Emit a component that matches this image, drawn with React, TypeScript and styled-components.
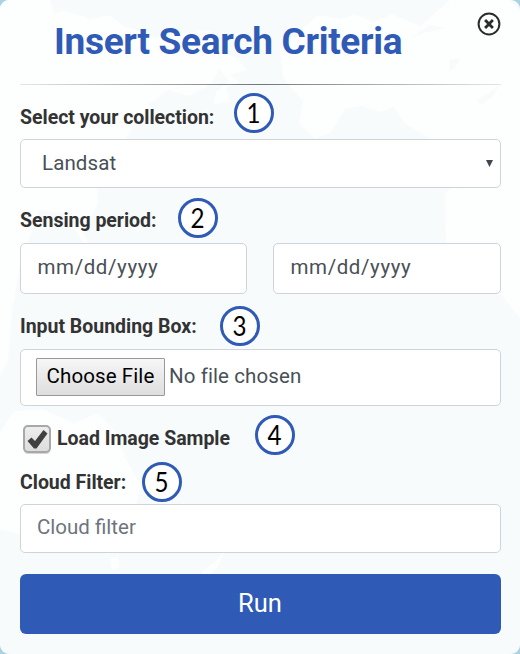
import React from "react";
import styled, { createGlobalStyle } from "styled-components";

const GlobalStyle = createGlobalStyle`
  *, *::before, *::after { box-sizing: border-box; }
  body { margin: 0; background: #a9d3e2; font-family: Roboto, sans-serif; }
  button, input, select { font-family: inherit; }
`;

const Panel = styled.form`
  position: relative;
  width: 520px;
  height: 654px;
  padding: 0 19px 20px 20px;
  border-radius: 9px;
  background: #f7fbfc;
  overflow: hidden;
  display: flex;
  flex-direction: column;
  isolation: isolate;
`;

const MapBackdrop = styled.svg`
  position: absolute;
  inset: 0;
  z-index: -1;
`;

const Header = styled.header`
  display: flex;
  justify-content: space-between;
  height: 84px;
`;

const Title = styled.h1`
  margin: 20px 0 0 34px;
  font-size: 37px;
  line-height: 44px;
  font-weight: 700;
  letter-spacing: -0.3px;
  color: #2f5bb7;
  white-space: nowrap;
`;

const CloseButton = styled.button`
  width: 24px;
  height: 24px;
  margin-top: 12px;
  padding: 0;
  border: 0;
  background: none;
  svg { display: block; }
`;

const Divider = styled.hr`
  width: 100%;
  height: 1px;
  margin: 0;
  border: 0;
  background: linear-gradient(to right, rgba(60, 60, 60, 0.12), rgba(60, 60, 60, 0.7) 50%, rgba(60, 60, 60, 0.12));
`;

const LabelRow = styled.div<{ $top: number; $bottom: number; $gap: number }>`
  display: flex;
  align-items: center;
  gap: ${(p) => p.$gap}px;
  height: 40px;
  margin: ${(p) => p.$top}px 0 ${(p) => p.$bottom}px;
`;

const Label = styled.label<{ $width: number; $shift?: number }>`
  width: ${(p) => p.$width}px;
  padding-top: ${(p) => p.$shift ?? 0}px;
  font-size: 19.5px;
  line-height: 24px;
  font-weight: 700;
  letter-spacing: -0.02px;
  color: #333;
  white-space: nowrap;
`;

const StepBadge = styled.span`
  display: flex;
  align-items: center;
  justify-content: center;
  width: 40px;
  height: 40px;
  border: 3px solid #2f5bb7;
  border-radius: 50%;
  background: #fff;
  color: #000;
  font: 26px/34px Lato, sans-serif;
`;

const Digit = styled.span`
  transform: scaleX(0.93);
`;

const Field = styled.div<{ $height: number }>`
  display: flex;
  align-items: center;
  flex: 1;
  min-height: ${(p) => p.$height}px;
  max-height: ${(p) => p.$height}px;
  border: 1px solid #ced4da;
  border-radius: 5px;
  background: #fff;
  color: #495057;
  font-size: 20.5px;
`;

const Select = styled.select`
  appearance: none;
  flex: 1;
  padding: 0 0 2px 21px;
  border: 0;
  background: none;
  color: inherit;
  font-size: inherit;
  letter-spacing: 0.1px;
`;

const SelectArrow = styled.svg`
  margin-right: 7px;
`;

const TextInput = styled.input<{ $muted?: boolean }>`
  width: 100%;
  padding: 0 0 3px ${(p) => (p.$muted ? 16 : 16.5)}px;
  border: 0;
  background: none;
  font-size: inherit;
  letter-spacing: ${(p) => (p.$muted ? 0 : 0.6)}px;
  color: #495057;
  &::placeholder { color: ${(p) => (p.$muted ? "#6c757d" : "#495057")}; opacity: 1; }
`;

const DateRow = styled.div`
  display: grid;
  grid-template-columns: 227px 228px;
  gap: 26px;
`;

const FileButton = styled.button`
  width: 129px;
  height: 38px;
  margin: 0 4px 2px 15px;
  padding: 0 0 1px;
  border: 1px solid #999;
  border-radius: 1px;
  background: linear-gradient(#f6f6f6, #dedede);
  color: #000;
  font-size: 20.5px;
  letter-spacing: 0.1px;
  white-space: nowrap;
`;

const FileStatus = styled.span`
  padding-bottom: 3px;
  letter-spacing: 0.1px;
`;

const Checkbox = styled.span`
  display: block;
  width: 28px;
  height: 29px;
  margin: 8px 6px 0 3px;
  svg { display: block; }
`;

const CheckGroup = styled.div`
  display: flex;
  align-items: center;
`;

const RunButton = styled.button`
  height: 60px;
  margin-top: 21px;
  padding: 0 1px 3px 0;
  border: 0;
  border-radius: 6px;
  background: #2f5bb7;
  color: #fff;
  font-size: 25.5px;
`;

function Continents() {
  return (
    <MapBackdrop width="520" height="654" viewBox="0 0 520 654" aria-hidden="true">
      <path fill="#fdfefe" d="M0 0H50L54 13 78 8 88 20 110 15 126 28 148 24 166 38 184 29 211 31 218 50 238 58 247 70 230 75 240 82 226 88 230 102 211 105 204 118 183 125 170 118 165 99 151 105 153 114 137 120 126 138 116 163 97 186 98 204 83 232 94 256 62 213 39 210 20 265 12 314 8 361 0 375Z" />
      <path fill="#fdfefe" d="M280 49 301 30 318 15 341 19 355 14 373 22 392 14 420 26 450 0H509L520 10V318L502 296 494 287 475 273 446 242 445 192 462 183 427 137 405 123 394 107 380 112 362 106 345 109 331 132 315 139 299 123 303 101 291 88 283 76Z" />
      <path fill="#fdfefe" d="M0 432 14 411 42 409 74 423 98 413 115 431 126 459 142 487 132 516 96 529 59 524 20 534 0 530Z M110 559 118 556 120 567 112 570Z M201 572 217 560 224 552 219 565 207 578Z" />
      <g fill="#f7fbfc">
        <path d="M148 105 168 90 190 96 212 83 219 68 229 81 216 92 213 106 199 115 180 111 172 125Z" />
        <path d="M410 39 430 25 447 28 423 33Z M449 60 460 58 455 67 450 71Z M477 100 489 93 499 85 493 96 481 105Z M344 109 366 115 371 129 391 128 405 147 414 177 432 191 407 202 381 180 365 160 344 139Z" />
        <path d="M53 4 78 0 102 9 86 17 69 12Z M129 27 158 20 180 27 213 23 191 34 171 31 155 38Z" />
      </g>
    </MapBackdrop>
  );
}

function CloseIcon() {
  return (
    <svg width="24" height="24" viewBox="0 0 24 24" fill="none" stroke="#2b2b2b">
      <circle cx="12" cy="12" r="10.4" strokeWidth="2" />
      <path d="M8.1 8.1 15.9 15.9M15.9 8.1 8.1 15.9" strokeWidth="2.8" />
    </svg>
  );
}

function CheckedBox() {
  return (
    <Checkbox role="checkbox" aria-checked="true">
      <svg width="28" height="29" viewBox="0 0 28 29">
        <defs>
          <linearGradient id="boxFill" x1="0" y1="0" x2="0" y2="1">
            <stop offset="0" stopColor="#eee" />
            <stop offset="1" stopColor="#dcdcdc" />
          </linearGradient>
        </defs>
        <rect x="1" y="2" width="26" height="27" rx="4" fill="#d5d7d7" />
        <rect x="1" y="1" width="26" height="26" rx="4" fill="url(#boxFill)" stroke="#a8a8a8" strokeWidth="2" />
        <path d="M4.5 16 8.5 12.5 12 16 20.5 5 24.5 8.5 13.5 23.5 11 23.5Z" fill="#404040" />
      </svg>
    </Checkbox>
  );
}

function Step({ n }: { n: number }) {
  return <StepBadge><Digit>{n}</Digit></StepBadge>;
}

export default function App() {
  return (
    <>
      <GlobalStyle />
      <Panel onSubmit={(e) => e.preventDefault()}>
        <Continents />
        <Header>
          <Title>Insert Search Criteria</Title>
          <CloseButton type="button" aria-label="Close"><CloseIcon /></CloseButton>
        </Header>
        <Divider />
        <LabelRow $top={8} $bottom={6} $gap={19}>
          <Label $width={195} $shift={10}>Select your collection:</Label>
          <Step n={1} />
        </LabelRow>
        <Field $height={49}>
          <Select defaultValue="Landsat"><option>Landsat</option></Select>
          <SelectArrow width="7" height="7" viewBox="0 0 7 7"><path d="M0 0H7L3.5 7Z" fill="#40464d" /></SelectArrow>
        </Field>
        <LabelRow $top={10} $bottom={5} $gap={21}>
          <Label $width={137} $shift={6}>Sensing period:</Label>
          <Step n={2} />
        </LabelRow>
        <DateRow>
          <Field $height={51}><TextInput placeholder="mm/dd/yyyy" aria-label="Start date" /></Field>
          <Field $height={51}><TextInput placeholder="mm/dd/yyyy" aria-label="End date" /></Field>
        </DateRow>
        <LabelRow $top={12} $bottom={3} $gap={22}>
          <Label $width={178} $shift={2}>Input Bounding Box:</Label>
          <Step n={3} />
        </LabelRow>
        <Field $height={57}>
          <FileButton type="button">Choose File</FileButton>
          <FileStatus>No file chosen</FileStatus>
        </Field>
        <LabelRow $top={9} $bottom={7} $gap={24}>
          <CheckGroup>
            <CheckedBox />
            <Label $width={174} $shift={8}>Load Image Sample</Label>
          </CheckGroup>
          <Step n={4} />
        </LabelRow>
        <LabelRow $top={0} $bottom={2} $gap={16}>
          <Label $width={106} $shift={2}>Cloud Filter:</Label>
          <Step n={5} />
        </LabelRow>
        <Field $height={49}><TextInput $muted placeholder="Cloud filter" aria-label="Cloud filter" /></Field>
        <RunButton type="submit">Run</RunButton>
      </Panel>
    </>
  );
}
